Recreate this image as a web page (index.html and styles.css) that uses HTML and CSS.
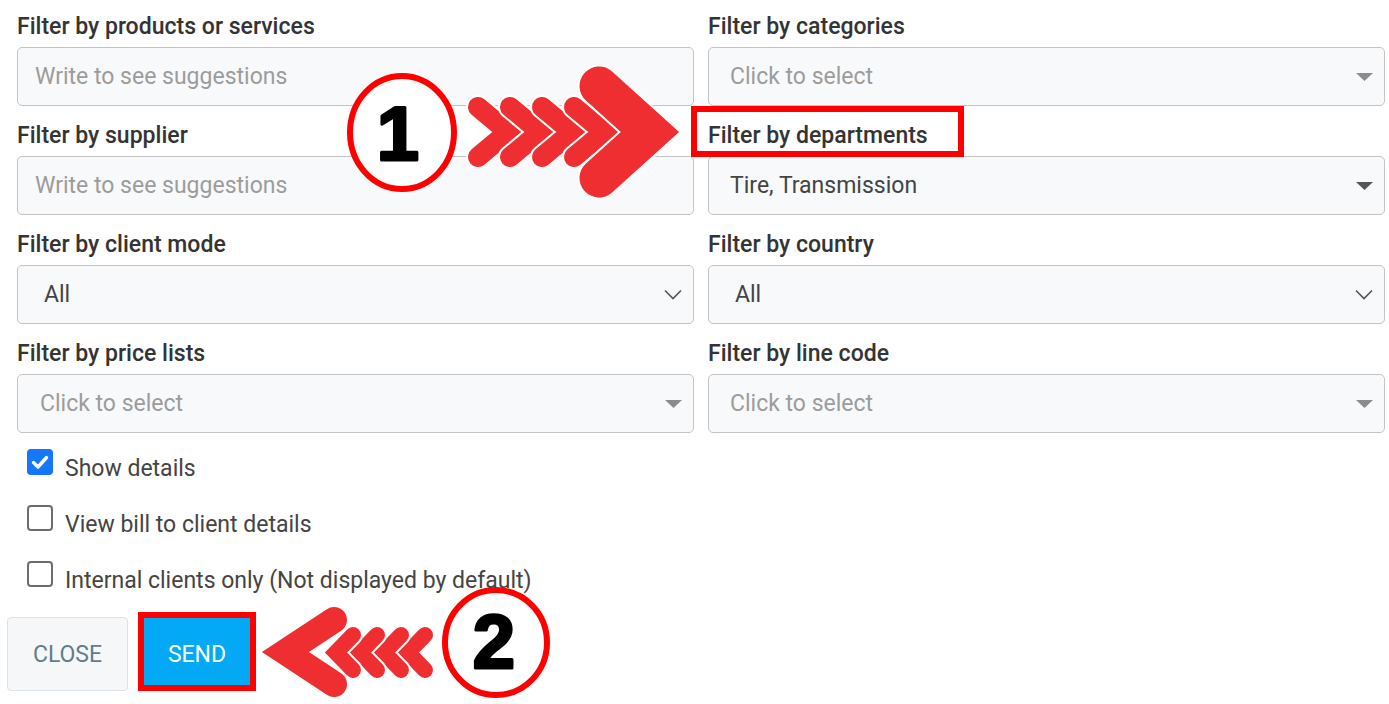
FILE: index.html
```html
<!DOCTYPE html>
<html lang="en">
<head>
  <meta charset="UTF-8" />
  <title>Report filters</title>
  <link rel="stylesheet" href="styles.css">
</head>
<body>

  <form class="filters">
    <div class="field-grid">
      <div class="field">
        <label>Filter by products or services</label>
        <input class="control" type="text" placeholder="Write to see suggestions">
      </div>
      <div class="field">
        <label>Filter by categories</label>
        <div class="control picker muted">
          <span>Click to select</span>
          <svg class="caret" width="17" height="8" viewBox="0 0 17 8"><path d="M0 0H17L8.5 8Z"/></svg>
        </div>
      </div>

      <div class="field">
        <label>Filter by supplier</label>
        <input class="control" type="text" placeholder="Write to see suggestions">
      </div>
      <div class="field">
        <label>Filter by departments</label>
        <div class="control picker">
          <span>Tire, Transmission</span>
          <svg class="caret dark" width="17" height="8" viewBox="0 0 17 8"><path d="M0 0H17L8.5 8Z"/></svg>
        </div>
      </div>

      <div class="field">
        <label>Filter by client mode</label>
        <div class="control picker native">
          <span>All</span>
          <svg class="chevron" width="18" height="11" viewBox="0 0 18 11"><path d="M1 1.5L9 9.5L17 1.5"/></svg>
        </div>
      </div>
      <div class="field">
        <label>Filter by country</label>
        <div class="control picker native">
          <span>All</span>
          <svg class="chevron" width="18" height="11" viewBox="0 0 18 11"><path d="M1 1.5L9 9.5L17 1.5"/></svg>
        </div>
      </div>

      <div class="field">
        <label>Filter by price lists</label>
        <div class="control picker muted wide">
          <span>Click to select</span>
          <svg class="caret" width="17" height="8" viewBox="0 0 17 8"><path d="M0 0H17L8.5 8Z"/></svg>
        </div>
      </div>
      <div class="field">
        <label>Filter by line code</label>
        <div class="control picker muted">
          <span>Click to select</span>
          <svg class="caret" width="17" height="8" viewBox="0 0 17 8"><path d="M0 0H17L8.5 8Z"/></svg>
        </div>
      </div>
    </div>

    <div class="options">
      <label class="check">
        <span class="box checked">
          <svg width="26" height="26" viewBox="0 0 26 26"><path d="M6.5 13.5L11 18L19.5 8.5"/></svg>
        </span>
        Show details
      </label>
      <label class="check">
        <span class="box"></span>
        View bill to client details
      </label>
      <label class="check">
        <span class="box"></span>
        Internal clients only (Not displayed by default)
      </label>
    </div>

    <div class="actions">
      <button type="button" class="btn btn-close">CLOSE</button>
      <button type="button" class="btn btn-send">SEND</button>
    </div>
  </form>

  <!-- tutorial markers drawn over the form -->
  <svg class="annotations" width="1389" height="704" viewBox="0 0 1389 704">
    <rect class="mark" x="694" y="109" width="267" height="45" />
    <rect class="mark" x="141" y="615" width="112" height="73" />

    <g class="arrow">
      <path class="halo" d="M478 107L508 132L478 157" stroke-width="24" />
      <path d="M478 107L508 132L478 157" stroke-width="20" />
      <path class="halo" d="M510 107L540 132L510 157" stroke-width="24" />
      <path d="M510 107L540 132L510 157" stroke-width="20" />
      <path class="halo" d="M542 107L572 132L542 157" stroke-width="24" />
      <path d="M542 107L572 132L542 157" stroke-width="20" />
      <path class="halo" d="M574 107L604 132L574 157" stroke-width="24" />
      <path d="M574 107L604 132L574 157" stroke-width="20" />
      <path class="halo" d="M599 86L650 132L599 178" stroke-width="43" />
      <path d="M599 86L650 132L599 178" stroke-width="39" />
    </g>

    <g class="arrow">
      <path class="halo" d="M425 635L408 652.5L425 670" stroke-width="20" />
      <path d="M425 635L408 652.5L425 670" stroke-width="16" />
      <path class="halo" d="M401 635L384 652.5L401 670" stroke-width="20" />
      <path d="M401 635L384 652.5L401 670" stroke-width="16" />
      <path class="halo" d="M377 635L360 652.5L377 670" stroke-width="20" />
      <path d="M377 635L360 652.5L377 670" stroke-width="16" />
      <path class="halo" d="M353 635L336 652.5L353 670" stroke-width="20" />
      <path d="M353 635L336 652.5L353 670" stroke-width="16" />
      <path class="halo" d="M334 620L285.5 652L334 684" stroke-width="30" />
      <path d="M334 620L285.5 652L334 684" stroke-width="26" />
    </g>

    <ellipse class="step" cx="402" cy="132.5" rx="52" ry="56.5" />
    <text class="step-num" x="398" y="160">1</text>

    <ellipse class="step" cx="496" cy="642.5" rx="51" ry="52.5" />
    <text class="step-num" x="494" y="668">2</text>
  </svg>

</body>
</html>
```

FILE: styles.css
```css
body {
  margin: 0;
  font-family: 'Roboto', 'Liberation Sans', sans-serif;
  background-color: #fff;
  color: #333;
}

.filters {
  padding: 14px 4px 0 7px;
}

.field-grid {
  display: grid;
  grid-template-columns: 1fr 1fr;
  column-gap: 14px;
  row-gap: 17px;
  margin-left: 10px;
}

.field label {
  display: block;
  font-family: 'Roboto Medium', 'Roboto', 'Liberation Sans', sans-serif;
  font-size: 23px;
  font-weight: 500;
  line-height: 26px;
  color: #343434;
  margin-bottom: 7px;
}

.control {
  box-sizing: border-box;
  width: 100%;
  height: 59px;
  border: 1px solid #c3c3c3;
  border-radius: 5px;
  background-color: #f8f9fa;
  font-family: 'Roboto', 'Liberation Sans', sans-serif;
  font-size: 23px;
  color: #444;
  padding: 0 17px;
  margin: 0;
  outline: none;
}

.control::placeholder {
  color: #9c9c9c;
}

.picker {
  display: flex;
  align-items: center;
  justify-content: space-between;
  padding: 0 11px 0 21px;
}

.picker.wide {
  padding-left: 22px;
}

.picker.native {
  padding-left: 26px;
}

.picker.muted span {
  color: #9c9c9c;
}

.caret {
  fill: #8c8c8c;
  flex-shrink: 0;
}

.caret.dark {
  fill: #555;
}

.chevron {
  fill: none;
  stroke: #555;
  stroke-width: 1.6;
  flex-shrink: 0;
}

.options {
  display: flex;
  flex-direction: column;
  gap: 26px;
  margin-top: 20px;
  padding-left: 20px;
}

.check {
  display: flex;
  align-items: center;
  gap: 12px;
  height: 30px;
  font-size: 23px;
  color: #444;
}

.box {
  box-sizing: border-box;
  width: 26px;
  height: 26px;
  border: 2px solid #6d6d6d;
  border-radius: 4px;
  margin-bottom: 12px;
  flex-shrink: 0;
}

.box.checked {
  border: none;
  background-color: #1677fb;
}

.box svg {
  display: block;
  fill: none;
  stroke: #fff;
  stroke-width: 3.4;
  stroke-linecap: round;
  stroke-linejoin: round;
}

.actions {
  display: flex;
  gap: 12px;
  margin-top: 22px;
}

.btn {
  height: 74px;
  font-family: 'Roboto', 'Liberation Sans', sans-serif;
  font-size: 23px;
  border-radius: 4px;
  cursor: pointer;
}

.btn-close {
  width: 121px;
  background-color: #f5f7f9;
  border: 1px solid #dde2e6;
  color: #607d8b;
}

.btn-send {
  width: 114px;
  background-color: #03a9f4;
  border: none;
  color: #fff;
}

.annotations {
  position: absolute;
  top: 0;
  left: 0;
  pointer-events: none;
}

.mark {
  fill: none;
  stroke: #ff0000;
  stroke-width: 6;
}

.arrow path {
  fill: none;
  stroke: #ee2e31;
  stroke-linecap: round;
  stroke-linejoin: miter;
}

.arrow path.halo {
  stroke: #fff;
}

.step {
  fill: #fff;
  stroke: #ff0000;
  stroke-width: 6;
}

.step-num {
  font-family: 'Liberation Sans', sans-serif;
  font-weight: bold;
  font-size: 76px;
  text-anchor: middle;
  fill: #000;
  stroke: #000;
  stroke-width: 3;
  stroke-linejoin: round;
}
```
